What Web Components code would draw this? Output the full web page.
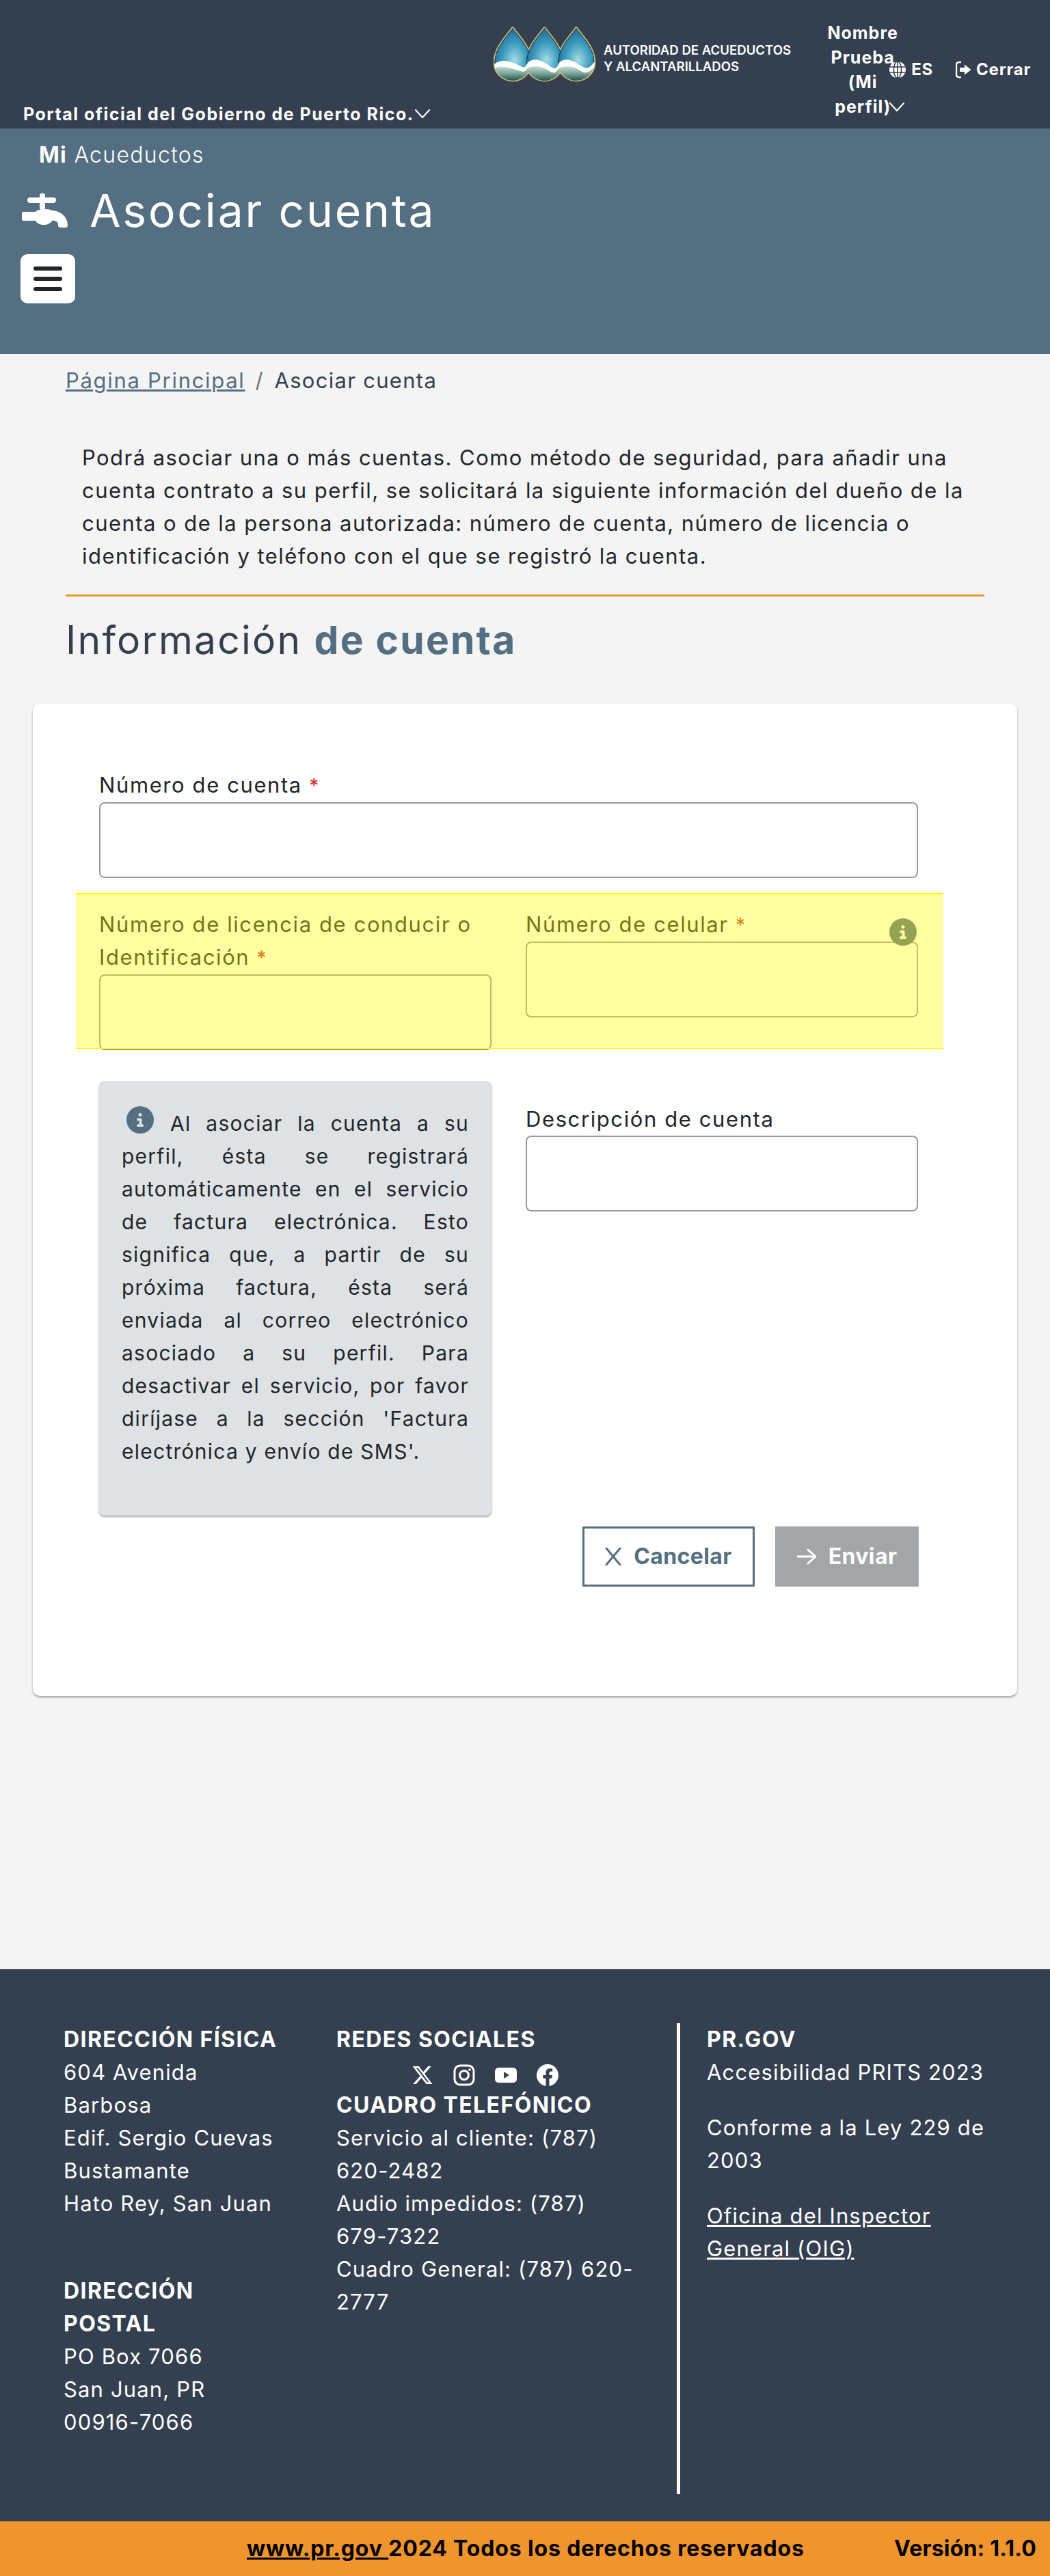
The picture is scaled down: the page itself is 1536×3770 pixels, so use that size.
<!DOCTYPE html>
<html lang="es">
<head>
<meta charset="utf-8">
<title>Asociar cuenta</title>
<style>
    html, body { margin: 0; padding: 0; background: #f4f4f4; }
    body { font-family: Inter, "Liberation Sans", sans-serif; color: #212529; font-size: 31px; line-height: 48px; letter-spacing: 1.5px; }
</style>
</head>
<body>
<aaa-topbar></aaa-topbar>
<aaa-hero title="Asociar cuenta"></aaa-hero>
<aaa-main>
    <aaa-breadcrumb current="Asociar cuenta">Página Principal</aaa-breadcrumb>
    <aaa-intro>Podrá asociar una o más cuentas. Como método de seguridad, para añadir una cuenta contrato a su perfil, se solicitará la siguiente información del dueño de la cuenta o de la persona autorizada: número de cuenta, número de licencia o identificación y teléfono con el que se registró la cuenta.</aaa-intro>
    <aaa-heading strong="de cuenta">Información</aaa-heading>
    <aaa-form></aaa-form>
</aaa-main>
<aaa-footer></aaa-footer>
<aaa-copyright></aaa-copyright>

<script>
const ICON_INFO = 'M256 512A256 256 0 1 0 256 0a256 256 0 1 0 0 512zM216 336h24V272H216c-13.3 0-24-10.7-24-24s10.7-24 24-24h48c13.3 0 24 10.7 24 24v88h8c13.3 0 24 10.7 24 24s-10.7 24-24 24H216c-13.3 0-24-10.7-24-24s10.7-24 24-24zm40-208a32 32 0 1 1 0 64 32 32 0 1 1 0-64z'
const CHEVRON = `<svg width="22" height="14" viewBox="0 0 22 14" fill="none" stroke="currentColor" stroke-width="2" stroke-linecap="round" stroke-linejoin="round"><path d="M1 1l10 11L21 1"/></svg>`

class AaaLogo extends HTMLElement {
    constructor() {
        super()
        this.attachShadow({mode: 'open'})
    }

    connectedCallback() {
        const drop = a => `M${a} 1C${a + 7} 12 ${a + 27} 30 ${a + 27} 52C${a + 27} 68 ${a + 14} 79 ${a} 79C${a - 14} 79 ${a - 27} 68 ${a - 27} 52C${a - 27} 30 ${a - 7} 12 ${a} 1Z`
        const drops = [28, 74.5, 121]
        this.shadowRoot.innerHTML = `
        <style>
            :host { display: flex; align-items: flex-start; }
            svg { display: block; flex: none; }
            div { margin: 22px 0 0 11px; font-size: 18.6px; line-height: 24px; font-weight: 600; letter-spacing: 0; color: #fff; white-space: nowrap; }
        </style>
        <svg width="150" height="81" viewBox="0 0 150 81">
            <defs>
                <radialGradient id="blue" cx=".55" cy=".62" r=".72">
                    <stop offset="0" stop-color="#a6dde6"/>
                    <stop offset=".45" stop-color="#3f9fc1"/>
                    <stop offset="1" stop-color="#12557f"/>
                </radialGradient>
                <linearGradient id="green" x1="0" y1="0" x2="0" y2="1">
                    <stop offset="0" stop-color="#cfe2d9"/>
                    <stop offset=".45" stop-color="#7eab9d"/>
                    <stop offset="1" stop-color="#17433f"/>
                </linearGradient>
                <clipPath id="drops">${drops.map(a => `<path d="${drop(a)}"/>`).join('')}</clipPath>
            </defs>
            ${drops.map(a => `<path d="${drop(a)}" fill="#fff" stroke="#dcb24e" stroke-width="3"/>`).join('')}
            ${drops.map(a => `<path d="${drop(a)}" fill="#fff"/>`).join('')}
            <g clip-path="url(#drops)">
                ${drops.map(a => `<path d="${drop(a)}" fill="url(#blue)" stroke="#174f70" stroke-width="1.5" transform="translate(${a} 40) scale(.97) translate(${-a} -40)"/>`).join('')}
                <path d="M0 56C10 46 24 50 36 56S45 60 50 53 68 47 80 56 92 60 96 53 114 47 126 56 140 60 150 49V81H0Z" fill="#fff"/>
                <path d="M0 61C12 56 24 60 36 64S46 64 50 61 68 56 80 64 92 64 96 61 114 56 126 64 140 64 150 57V81H0Z" fill="url(#green)"/>
            </g>
        </svg>
        <div>AUTORIDAD DE ACUEDUCTOS<br>Y ALCANTARILLADOS</div>
        `
    }
}

class AaaTopbar extends HTMLElement {
    constructor() {
        super()
        this.attachShadow({mode: 'open'})
    }

    connectedCallback() {
        this.shadowRoot.innerHTML = `
        <style>
            :host { display: flex; height: 188px; background: #344050; color: #fff; font-size: 25px; line-height: 36px; font-weight: 700; letter-spacing: 1.5px; padding: 0 28px 0 34px; box-sizing: border-box; }
            .portal { align-self: flex-end; margin-bottom: 3px; display: flex; align-items: center; white-space: nowrap; }
            .portal svg { margin-left: 1px; }
            aaa-logo { margin: 39px 0 0 auto; }
            .name { width: 104px; margin: 30px 0 0 53px; text-align: center; letter-spacing: 1px; }
            .name svg { vertical-align: 1px; margin: 0 -20px 0 -2px; }
            .lang, .close { display: flex; align-items: center; height: 36px; margin-top: 84px; letter-spacing: .8px; }
            .lang { margin-left: -13px; gap: 8px; font-size: 24px; }
            .close { margin-left: 33px; gap: 7px; font-size: 24px; }
        </style>
        <div class="portal">Portal oficial del Gobierno de Puerto Rico.${CHEVRON}</div>
        <aaa-logo></aaa-logo>
        <div class="name">Nombre Prueba (Mi perfil)${CHEVRON}</div>
        <div class="lang">
            <svg width="24" height="24" viewBox="0 0 24 24"><circle cx="12" cy="12" r="12" fill="#fff"/><g fill="none" stroke="#344050" stroke-width="1.6"><ellipse cx="12" cy="12" rx="5.6" ry="12"/><path d="M0 8h24M0 16h24M12 0v24"/></g></svg>
            ES
        </div>
        <div class="close">
            <svg width="23" height="28" viewBox="0 0 23 28" fill="#fff"><path d="M7 3H5Q1 3 1 7V21Q1 25 5 25H7" fill="none" stroke="#fff" stroke-width="2.4" stroke-linecap="round"/><path d="M6 11h7V6.5L22.5 14 13 21.5V17H6Z"/></svg>
            Cerrar
        </div>
        `
    }
}

class AaaHero extends HTMLElement {
    constructor() {
        super()
        this.attachShadow({mode: 'open'})
    }

    connectedCallback() {
        this.shadowRoot.innerHTML = `
        <style>
            :host { display: block; height: 330px; box-sizing: border-box; background: #546e82; color: #fff; padding: 15px 0 0 30px; }
            .brand { margin-left: 27px; font-size: 32px; line-height: 48px; letter-spacing: 1.3px; font-weight: 300; }
            .brand b { font-weight: 700; }
            .title { display: flex; align-items: center; gap: 32px; margin: 19px 0 0 2px; height: 76px; }
            h1 { margin: 0; font-size: 66px; line-height: 76px; font-weight: 400; letter-spacing: 2.8px; }
            button { display: flex; flex-direction: column; justify-content: center; align-items: center; gap: 9px; width: 80px; height: 72px; margin-top: 26px; padding: 0; border: 0; border-radius: 10px; background: #fff; }
            button i { display: block; width: 42px; height: 6px; border-radius: 3px; background: #212529; }
            svg { flex: none; }
        </style>
        <div class="brand"><b>Mi</b> Acueductos</div>
        <div class="title">
            <svg width="67" height="50" viewBox="0 0 67 50" fill="#fff"><rect x="8" y="6" width="42" height="8" rx="4"/><rect x="26" y="0" width="8" height="24" rx="3"/><path d="M2 27H20C24 22 40 22 44 25C58 26 67 35 67 47Q67 50 64 50H56Q53 50 53 46C53 42 50 40 46 40H44C40 48 24 48 20 40H2Q0 40 0 38V29Q0 27 2 27Z"/></svg>
            <h1>${this.getAttribute('title')}</h1>
        </div>
        <button aria-label="Menu"><i></i><i></i><i></i></button>
        `
    }
}

class AaaMain extends HTMLElement {
    constructor() {
        super()
        this.attachShadow({mode: 'open'})
    }

    connectedCallback() {
        this.shadowRoot.innerHTML = `
        <style>
            :host { display: block; height: 2364px; box-sizing: border-box; background: #f4f4f4; }
        </style>
        <slot></slot>
        `
    }
}

class AaaBreadcrumb extends HTMLElement {
    constructor() {
        super()
        this.attachShadow({mode: 'open'})
    }

    connectedCallback() {
        this.shadowRoot.innerHTML = `
        <style>
            :host { display: flex; padding: 15px 0 0 96px; font-size: 31px; line-height: 48px; letter-spacing: 1.7px; color: #344050; }
            a { color: #546e82; text-decoration: underline; }
            span { margin: 0 15px; color: #6c757d; }
            div { letter-spacing: 1.3px; }
        </style>
        <a href="#"><slot></slot></a><span>/</span><div>${this.getAttribute('current')}</div>
        `
    }
}

class AaaIntro extends HTMLElement {
    constructor() {
        super()
        this.attachShadow({mode: 'open'})
    }

    connectedCallback() {
        this.shadowRoot.innerHTML = `
        <style>
            :host { display: block; margin: 65px 96px 0 120px; font-size: 31px; line-height: 48px; letter-spacing: 1.45px; color: #212529; }
        </style>
        <slot></slot>
        `
    }
}

class AaaHeading extends HTMLElement {
    constructor() {
        super()
        this.attachShadow({mode: 'open'})
    }

    connectedCallback() {
        this.shadowRoot.innerHTML = `
        <style>
            :host { display: block; margin: 32px 96px 0; border-top: 3px solid #f0952d; padding-top: 29px; font-size: 57px; line-height: 70px; letter-spacing: 2.2px; color: #344050; }
            b { font-weight: 700; color: #546e82; }
        </style>
        <slot></slot> <b>${this.getAttribute('strong')}</b>
        `
    }
}

class AaaField extends HTMLElement {
    constructor() {
        super()
        this.attachShadow({mode: 'open'})
    }

    connectedCallback() {
        const required = this.hasAttribute('required') ? ' <em>*</em>' : ''
        this.shadowRoot.innerHTML = `
        <style>
            :host { display: block; position: relative; }
            label { display: block; font-size: 31px; line-height: 48px; letter-spacing: 1.6px; color: #212529; }
            em { font-style: normal; font-size: 28px; color: #c9302c; letter-spacing: 0; }
            .box { display: block; width: 100%; height: 111px; box-sizing: border-box; margin: 0; border: 2px solid #9a9a9a; border-radius: 8px; background: #fff; }
            svg { position: absolute; top: 15px; right: 2px; }
        </style>
        <label><slot></slot>${required}</label>
        <input class="box" type="text">
        ${this.hasAttribute('hint') ? `<svg width="40" height="40" viewBox="0 0 512 512" fill="#546e82"><path d="${ICON_INFO}"/></svg>` : ''}
        `
    }
}

class AaaNote extends HTMLElement {
    constructor() {
        super()
        this.attachShadow({mode: 'open'})
    }

    connectedCallback() {
        this.shadowRoot.innerHTML = `
        <style>
            :host { display: block; height: 636px; box-sizing: border-box; padding: 37px 33px 0 33px; background: #dee2e5; border-radius: 8px; box-shadow: 0 2px 3px rgba(0,0,0,.35); font-size: 30px; line-height: 48px; letter-spacing: 1.25px; text-align: justify; color: #212529; }
            svg { display: inline-block; vertical-align: -4px; margin: 0 24px 0 7px; }
        </style>
        <svg width="40" height="40" viewBox="0 0 512 512" fill="#546e82"><path d="${ICON_INFO}"/></svg><slot></slot>
        `
    }
}

class AaaButton extends HTMLElement {
    constructor() {
        super()
        this.attachShadow({mode: 'open'})
    }

    connectedCallback() {
        const outline = this.getAttribute('variant') === 'outline'
        this.shadowRoot.innerHTML = `
        <style>
            :host { display: inline-flex; align-items: center; justify-content: center; gap: 18px; box-sizing: border-box; height: 88px; font-size: 32px; font-weight: 700; letter-spacing: .4px; }
            :host([variant=outline]) { width: 252px; border: 3px solid #546e82; background: #fff; color: #546e82; }
            :host([variant=disabled]) { width: 210px; background: #a2a6a9; color: #fff; }
            svg { flex: none; }
        </style>
        <svg width="${outline ? 24 : 28}" height="${outline ? 26 : 24}" viewBox="0 0 ${outline ? '24 26' : '28 24'}" fill="none" stroke="currentColor" stroke-width="3" stroke-linecap="round" stroke-linejoin="round">
            <path d="${outline ? 'M2 1L22 25M22 1L2 25' : 'M1 12H27M16 2L27 12L16 22'}"/>
        </svg>
        <slot></slot>
        `
    }
}

class AaaForm extends HTMLElement {
    constructor() {
        super()
        this.attachShadow({mode: 'open'})
    }

    connectedCallback() {
        this.shadowRoot.innerHTML = `
        <style>
            :host { display: block; box-sizing: border-box; height: 1452px; margin: 58px 48px 0; padding: 95px 145px 0 97px; background: #fff; border-radius: 10px; box-shadow: 0 2px 3px rgba(0,0,0,.35); }
            .row { display: grid; grid-template-columns: 1fr 1fr; gap: 50px; align-items: start; }
            .pair { position: relative; margin-top: 44px; }
            .highlight { position: absolute; left: -34px; right: -37px; top: -22px; height: 228px; box-sizing: border-box; background: rgba(255,255,0,.37); border-top: 2px solid #ffff00; border-bottom: 1px solid #ffff00; pointer-events: none; }
            .notes { margin-top: 45px; }
            .notes aaa-field { margin-top: 32px; }
            .actions { display: flex; justify-content: flex-end; gap: 30px; margin: 16px -1px 0 0; }
        </style>
        <aaa-field required>Número de cuenta</aaa-field>
        <div class="row pair">
            <aaa-field required>Número de licencia de conducir o<br>Identificación</aaa-field>
            <aaa-field required hint>Número de celular</aaa-field>
            <div class="highlight"></div>
        </div>
        <div class="row notes">
            <aaa-note>Al asociar la cuenta a su perfil, ésta se registrará automáticamente en el servicio de factura electrónica. Esto significa que, a partir de su próxima factura, ésta será enviada al correo electrónico asociado a su perfil. Para desactivar el servicio, por favor diríjase a la sección 'Factura electrónica y envío de SMS'.</aaa-note>
            <aaa-field>Descripción de cuenta</aaa-field>
        </div>
        <div class="actions">
            <aaa-button variant="outline">Cancelar</aaa-button>
            <aaa-button variant="disabled">Enviar</aaa-button>
        </div>
        `
    }
}

class AaaFooter extends HTMLElement {
    constructor() {
        super()
        this.attachShadow({mode: 'open'})
    }

    connectedCallback() {
        this.shadowRoot.innerHTML = `
        <style>
            :host { display: grid; grid-template-columns: 399px 498px 1fr; height: 808px; box-sizing: border-box; padding: 79px 0 40px 93px; background: #344050; color: #fff; font-size: 31px; line-height: 48px; letter-spacing: 1.15px; }
            h4 { margin: 0; font-size: 32px; line-height: 48px; font-weight: 700; letter-spacing: 1.4px; }
            p { margin: 0; }
            .postal { margin-top: 80px; }
            .social { display: flex; gap: 29px; height: 48px; box-sizing: border-box; padding: 12px 0 0 110px; }
            .social svg { display: block; flex: none; }
            .gov { border-left: 5px solid #fff; padding-left: 39px; }
            .gov p { margin-bottom: 33px; }
            a { color: inherit; }
        </style>
        <div>
            <h4>DIRECCIÓN FÍSICA</h4>
            <p>604 Avenida<br>Barbosa<br>Edif. Sergio Cuevas<br>Bustamante<br>Hato Rey, San Juan</p>
            <h4 class="postal">DIRECCIÓN<br>POSTAL</h4>
            <p>PO Box 7066<br>San Juan, PR<br>00916-7066</p>
        </div>
        <div>
            <h4>REDES SOCIALES</h4>
            <div class="social">
                <svg width="32" height="32" viewBox="0 0 512 512" fill="#fff"><path d="M389.2 48h70.6L305.6 224.2 487 464H345L233.7 318.6 106.5 464H35.8L200.7 275.5 26.8 48H172.4L272.9 180.9 389.2 48zM364.4 421.8h39.1L151.1 88h-42L364.4 421.8z"/></svg>
                <svg width="32" height="32" viewBox="0 0 32 32" fill="none" stroke="#fff" stroke-width="3"><rect x="2" y="2" width="28" height="28" rx="8"/><circle cx="16" cy="16" r="6.5"/><circle cx="24" cy="8" r="1.8" fill="#fff" stroke="none"/></svg>
                <svg width="32" height="32" viewBox="0 0 32 32"><path fill="#fff" fill-rule="evenodd" d="M6 5H26Q32 5 32 11V21Q32 27 26 27H6Q0 27 0 21V11Q0 5 6 5ZM13 11V21L21 16Z"/></svg>
                <svg width="32" height="32" viewBox="0 0 16 16" fill="#fff"><path d="M16 8.049c0-4.446-3.582-8.05-8-8.05C3.58 0-.002 3.603-.002 8.05c0 4.017 2.926 7.347 6.75 7.951v-5.625h-2.03V8.05H6.75V6.275c0-2.017 1.195-3.131 3.022-3.131.876 0 1.791.157 1.791.157v1.98h-1.009c-.993 0-1.303.621-1.303 1.258v1.51h2.218l-.354 2.326H9.25V16c3.824-.604 6.75-3.934 6.75-7.951z"/></svg>
            </div>
            <h4>CUADRO TELEFÓNICO</h4>
            <p>Servicio al cliente: (787)<br>620-2482<br>Audio impedidos: (787)<br>679-7322<br>Cuadro General: (787) 620-<br>2777</p>
        </div>
        <div class="gov">
            <h4>PR.GOV</h4>
            <p>Accesibilidad PRITS 2023</p>
            <p>Conforme a la Ley 229 de<br>2003</p>
            <p><a href="#">Oficina del Inspector<br>General (OIG)</a></p>
        </div>
        `
    }
}

class AaaCopyright extends HTMLElement {
    constructor() {
        super()
        this.attachShadow({mode: 'open'})
    }

    connectedCallback() {
        this.shadowRoot.innerHTML = `
        <style>
            :host { display: flex; justify-content: space-between; align-items: center; height: 80px; box-sizing: border-box; padding: 0 20px 0 361px; background: #f0952d; color: #000; font-size: 32px; font-weight: 700; letter-spacing: .85px; white-space: pre; }
            a { color: inherit; }
            .version { letter-spacing: .2px; }
        </style>
        <div><a href="#">www.pr.gov </a>2024 Todos los derechos reservados</div>
        <div class="version">Versión: 1.1.0</div>
        `
    }
}

customElements.define('aaa-logo', AaaLogo)
customElements.define('aaa-topbar', AaaTopbar)
customElements.define('aaa-hero', AaaHero)
customElements.define('aaa-main', AaaMain)
customElements.define('aaa-breadcrumb', AaaBreadcrumb)
customElements.define('aaa-intro', AaaIntro)
customElements.define('aaa-heading', AaaHeading)
customElements.define('aaa-field', AaaField)
customElements.define('aaa-note', AaaNote)
customElements.define('aaa-button', AaaButton)
customElements.define('aaa-form', AaaForm)
customElements.define('aaa-footer', AaaFooter)
customElements.define('aaa-copyright', AaaCopyright)
</script>
</body>
</html>
